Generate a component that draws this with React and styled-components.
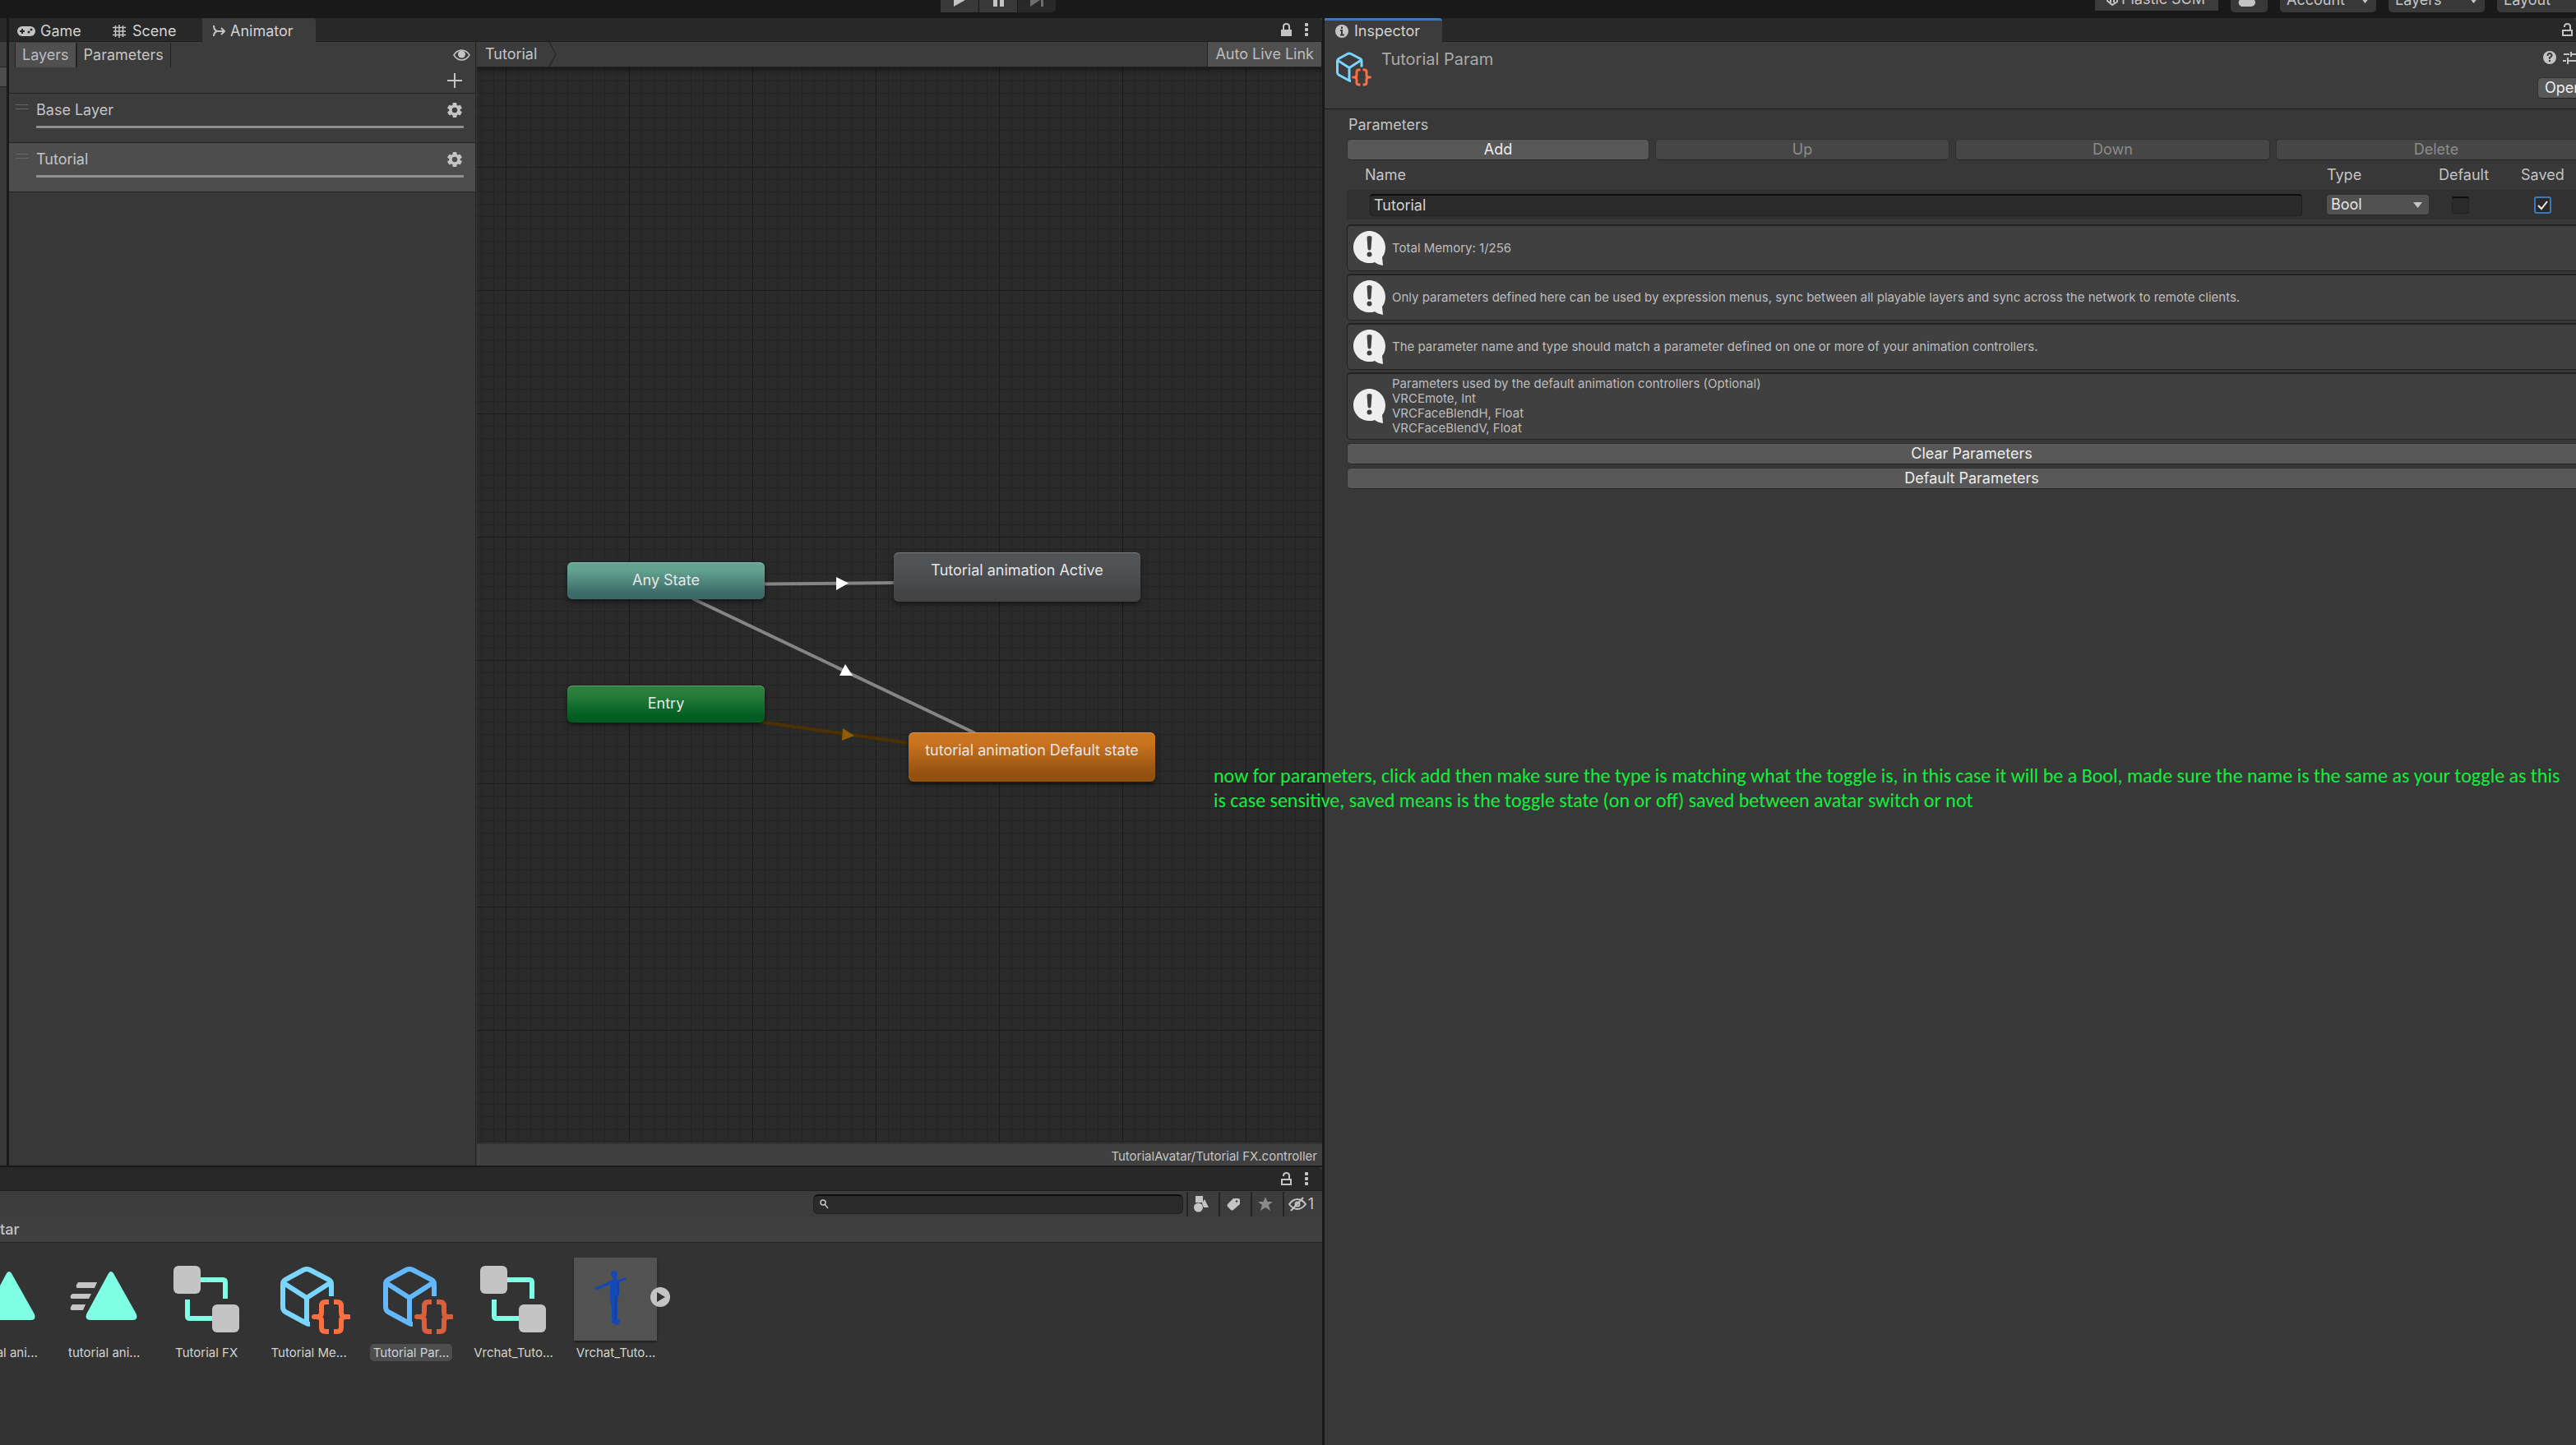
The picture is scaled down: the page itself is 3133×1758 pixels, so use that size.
import React, { useState } from 'react';
import styled, { createGlobalStyle } from 'styled-components';

const GlobalStyle = createGlobalStyle`
    * {
        box-sizing: border-box;
    }
    body {
        margin: 0;
        background-color: #191919;
        color: #c4c4c4;
        font-family: Inter, "Liberation Sans", sans-serif;
        font-size: 18px;
        line-height: 24px;
        overflow: hidden;
    }
    button, input, select {
        font: inherit;
        color: inherit;
    }
    svg {
        display: block;
        flex: none;
    }
`;

const Whole = styled.div`
    position: relative;
    width: 100%;
    height: 100vh;
    display: flex;
    flex-direction: column;
    overflow: hidden;
`;

const TopBar = styled.header`
    display: grid;
    grid-template-columns: minmax(0, 1144fr) minmax(0, 1404fr) minmax(0, 585fr);
    align-content: end;
    height: 22px;
    padding-bottom: 7px;
    overflow: hidden;
`;

const PlayGroup = styled.div`
    grid-column: 2;
    display: flex;
    gap: 1px;
`;

const PlayButton = styled.button`
    display: flex;
    align-items: center;
    justify-content: center;
    width: 46px;
    height: 30px;
    padding: 0;
    border: 0;
    background-color: ${({ disabled }) => (disabled ? '#282828' : '#383838')};
    color: ${({ disabled }) => (disabled ? '#6e6e6e' : '#c4c4c4')};
    border-radius: ${({ disabled }) => (disabled ? '0 5px 5px 0' : '0')};
`;

const TopMenus = styled.div`
    display: flex;
    gap: 15px;
    white-space: nowrap;
`;

const TopButton = styled.button`
    display: flex;
    flex: none;
    align-items: center;
    justify-content: space-between;
    width: ${({ $width }) => $width}px;
    height: 30px;
    padding: 0 8px;
    border: 0;
    border-radius: 5px;
    background-color: #383838;
`;

const PlasticButton = styled(TopButton)`
    justify-content: flex-start;
    gap: 4px;
    height: 28px;
    padding-left: 14px;
    border-radius: 0;
    background-color: #3c3c3c;
`;

const Workspace = styled.div`
    flex: 1;
    min-height: 0;
    display: grid;
    grid-template-columns: 1608fr 1522fr;
    column-gap: 3px;
`;

const LeftSide = styled.div`
    min-width: 0;
    min-height: 0;
    display: grid;
    grid-template-rows: minmax(0, 1396fr) minmax(0, 338fr);
    row-gap: 2px;
`;

const UpperRow = styled.div`
    display: flex;
    gap: 3px;
    min-height: 0;
`;

const SidePanel = styled.div`
    width: 8px;
    background-color: #383838;
`;

const SideStrip = styled.div`
    height: ${({ $height }) => $height}px;
    background-color: ${({ $color }) => $color};
    border-bottom: 1px solid #232323;
`;

const Panel = styled.section`
    flex: 1;
    min-width: 0;
    min-height: 0;
    display: flex;
    flex-direction: column;
    background-color: #383838;
    overflow: hidden;
`;

const TabBar = styled.div`
    display: flex;
    flex: none;
    height: 29px;
    background-color: #282828;
    border-bottom: 1px solid #1e1e1e;
    border-radius: 0 5px 0 0;
`;

const Tab = styled.button`
    display: flex;
    align-items: center;
    gap: ${({ $gap }) => $gap || 6}px;
    height: ${({ $active }) => ($active ? 29 : 28)}px;
    width: ${({ $width }) => $width}px;
    padding: ${({ $focused }) => ($focused ? 0 : 3)}px 0 0 ${({ $pad }) => $pad}px;
    border: 0;
    border-top: ${({ $focused }) => ($focused ? '3px solid #3a79bb' : '0')};
    border-radius: 0 4px 0 0;
    background-color: ${({ $active }) => ($active ? '#3c3c3c' : 'transparent')};
    color: #d2d2d2;
`;

const TabTools = styled.div`
    display: flex;
    align-items: center;
    gap: 16px;
    margin-left: auto;
    padding-right: ${({ $right }) => $right}px;
`;

const IconButton = styled.button`
    display: flex;
    padding: 0;
    border: 0;
    background: none;
    color: #c4c4c4;
`;

const AnimatorBody = styled.div`
    flex: 1;
    min-height: 0;
    display: grid;
    grid-template-columns: 568px minmax(0, 1fr);
`;

const LayerColumn = styled.div`
    border-right: 1px solid #232323;
`;

const LayerToolbar = styled.div`
    display: flex;
    align-items: center;
    height: 31px;
    padding: 0 6px 0 7px;
    background-color: #3c3c3c;
`;

const ToolbarToggle = styled.button`
    height: 30px;
    padding: 0 ${({ $pad }) => $pad}px;
    border: 0;
    border-left: 1px solid #232323;
    border-right: 1px solid #232323;
    background-color: ${({ $on }) => ($on ? '#505050' : '#3c3c3c')};
    color: ${({ $on }) => ($on ? '#bdbdbd' : '#c4c4c4')};
`;

const AddRow = styled.div`
    display: flex;
    align-items: center;
    justify-content: flex-end;
    height: 32px;
    padding-right: 16px;
    background-color: #3c3c3c;
    border-bottom: 1px solid #232323;
`;

const LayerList = styled.ul`
    margin: 0;
    padding: 0;
    list-style: none;
`;

const LayerItem = styled.li`
    display: grid;
    grid-template-columns: 25px minmax(0, 1fr);
    height: 60px;
    padding: 8px 14px 0 8px;
    background-color: ${({ $selected }) => ($selected ? '#4d4d4d' : '#3c3c3c')};
    border-bottom: 1px solid #232323;
`;

const DragHandle = styled.span`
    width: 15px;
    height: 6px;
    margin-top: 5px;
    border-top: 1px solid #666;
    border-bottom: 1px solid #666;
`;

const LayerHead = styled.div`
    display: flex;
    align-items: center;
    justify-content: space-between;
    height: 24px;
    padding-right: 2px;
`;

const WeightBar = styled.div`
    height: 3px;
    margin-top: 7px;
    background-color: #8f8f8f;
`;

const GraphColumn = styled.div`
    display: flex;
    flex-direction: column;
    min-height: 0;
    padding-left: 1px;
`;

const GraphToolbar = styled.div`
    display: flex;
    align-items: center;
    justify-content: space-between;
    height: 31px;
    padding-left: 10px;
    background-color: #3c3c3c;
    border-bottom: 1px solid #232323;
`;

const Crumb = styled.div`
    display: flex;
    align-items: center;
    gap: 14px;
`;

const Graph = styled.div`
    position: relative;
    flex: 1;
    min-height: 0;
    overflow: hidden;
    background-color: #2a2a2a;
    background-image:
        linear-gradient(to bottom, rgba(0, 0, 0, 0.35), transparent 8px),
        linear-gradient(to right, #1b1b1b 1px, transparent 1px),
        linear-gradient(to bottom, #1b1b1b 1px, transparent 1px),
        linear-gradient(to right, #242424 1px, transparent 1px),
        linear-gradient(to bottom, #242424 1px, transparent 1px);
    background-size: 100% 100%, 150px 150px, 150px 150px, 15px 15px, 15px 15px;
    background-position: 0 0, 35px 0, 0 121px, 5px 0, 0 1px;
    background-repeat: no-repeat, repeat, repeat, repeat, repeat;
`;

const Edges = styled.svg`
    position: absolute;
    left: 0;
    top: 0;
`;

const nodeColors = {
    any: ['#63a391', '#3b6a67'],
    entry: ['#2c7f3c', '#005d22'],
    state: ['#515457', '#424345'],
    initial: ['#cb7420', '#93500f'],
};

const Node = styled.div`
    position: absolute;
    left: ${({ $x }) => $x}px;
    top: ${({ $y }) => $y}px;
    width: ${({ $state }) => ($state ? 300 : 240)}px;
    height: ${({ $state }) => ($state ? 60 : 45)}px;
    padding-top: 10px;
    text-align: center;
    color: #e6e6e6;
    border-radius: 6px;
    background-image: linear-gradient(
        to bottom,
        ${({ $kind }) => nodeColors[$kind][0]} 20%,
        ${({ $kind }) => nodeColors[$kind][1]} 85%
    );
    box-shadow: inset 0 1px 1px rgba(255, 255, 255, 0.25), 0 3px 6px rgba(0, 0, 0, 0.5);
`;

const GraphFooter = styled.div`
    height: 28px;
    padding: 3px 6px 0 0;
    border-top: 2px solid #333;
    background-color: #404040;
    font-size: 15px;
    text-align: right;
`;

const ProjectToolbar = styled.div`
    display: flex;
    align-items: center;
    justify-content: flex-end;
    height: 31px;
    background-color: #3c3c3c;
`;

const SearchBox = styled.label`
    display: flex;
    align-items: center;
    width: 450px;
    height: 24px;
    margin-right: 4px;
    padding-left: 7px;
    border: 1px solid #212121;
    border-top: 2px solid #0d0d0d;
    border-radius: 6px;
    background-color: #2a2a2a;
`;

const SearchInput = styled.input`
    flex: 1;
    min-width: 0;
    border: 0;
    outline: 0;
    background: none;
    font-size: 15px;
    line-height: 18px;
`;

const FilterButton = styled.button`
    display: flex;
    align-items: center;
    justify-content: center;
    gap: 2px;
    width: ${({ $wide }) => ($wide ? 48 : 39)}px;
    height: 30px;
    padding: 0 5px 0 0;
    border: 0;
    border-left: 2px solid #252525;
    background: none;
    color: ${({ $dim }) => ($dim ? '#8a8a8a' : '#c4c4c4')};
`;

const PathBar = styled.div`
    display: flex;
    align-items: center;
    height: 32px;
    background-color: #404040;
    border-bottom: 1px solid #232323;
`;

const PathCrumb = styled.div`
    width: 25px;
    white-space: nowrap;
    font-weight: 500;
`;

const AssetGrid = styled.div`
    flex: 1;
    display: grid;
    grid-template-columns: repeat(13, minmax(0, 1fr));
    align-content: start;
    margin-left: -60px;
    padding: 18px 50px 0 0;
    background-color: #333;
`;

const Asset = styled.div`
    position: relative;
    display: flex;
    flex-direction: column;
    align-items: center;
    gap: 4px;
`;

const AssetLabel = styled.div`
    height: 21px;
    padding: 0 4px;
    border-radius: 5px;
    background-color: ${({ $selected }) => ($selected ? '#4d4d4d' : 'transparent')};
    color: #d2d2d2;
    font-size: 15px;
    line-height: 21px;
    white-space: nowrap;
`;

const Thumb = styled.div`
    width: 101px;
    height: 101px;
    background-color: ${({ $filled }) => ($filled ? '#525252' : 'transparent')};
    box-shadow: ${({ $filled }) => ($filled ? '0 2px 3px rgba(0, 0, 0, 0.4)' : 'none')};
`;

const ExpandButton = styled.button`
    position: absolute;
    left: 104px;
    top: 36px;
    padding: 0;
    border: 0;
    background: none;
`;

const InspectorHeader = styled.div`
    display: flex;
    align-items: flex-start;
    height: 82px;
    margin-right: -32px;
    padding: 9px 15px 0 13px;
    background-color: #3c3c3c;
    border-bottom: 1px solid #1a1a1a;
`;

const AssetTitle = styled.h1`
    margin: 0 0 0 10px;
    color: #a9a9a9;
    font-size: 20px;
    font-weight: 400;
    line-height: 24px;
`;

const HeaderTools = styled.div`
    display: flex;
    flex-direction: column;
    gap: 16px;
    margin-left: auto;
    padding-top: 2px;
`;

const HeaderIcons = styled.div`
    display: flex;
    gap: 8px;
    padding-left: 7px;
`;

const InspectorBody = styled.div`
    margin-right: -25px;
    padding: 7px 0 0 27px;
`;

const SectionLabel = styled.h2`
    margin: 0 0 5px 2px;
    font-size: 18px;
    font-weight: 400;
    line-height: 24px;
`;

const Button = styled.button`
    height: 26px;
    padding: 0 8px;
    border: 1px solid #303030;
    border-bottom-color: #242424;
    border-radius: 5px;
    background-color: ${({ disabled }) => (disabled ? '#464646' : '#585858')};
    color: ${({ disabled }) => (disabled ? '#8c8c8c' : '#eee')};
    line-height: 24px;
    white-space: nowrap;
`;

const ButtonRow = styled.div`
    display: grid;
    grid-template-columns: 368fr 358fr 383fr 390fr;
    column-gap: 7px;
    margin-bottom: 3px;
`;

const ParamTable = styled.table`
    width: 100%;
    table-layout: fixed;
    border-collapse: collapse;
    th {
        height: 33px;
        padding: 0 0 4px;
        font-weight: 400;
        text-align: left;
    }
    th:first-child {
        padding-left: 22px;
    }
    td {
        height: 36px;
        padding: 0;
        background-color: #313131;
    }
`;

const HeadCell = styled.th`
    width: ${({ $width }) => $width}px;
`;

const NameInput = styled.input`
    display: block;
    width: calc(100% - 58px);
    height: 27px;
    margin-left: 28px;
    padding: 0 4px;
    border: 1px solid #212121;
    border-top: 2px solid #0d0d0d;
    border-radius: 4px;
    background-color: #2a2a2a;
    color: #d2d2d2;
`;

const SelectWrap = styled.div`
    display: grid;
    width: 124px;
    align-items: center;
    select, svg {
        grid-area: 1 / 1;
    }
    svg {
        justify-self: end;
        margin-right: 8px;
        pointer-events: none;
    }
`;

const TypeSelect = styled.select`
    appearance: none;
    width: 124px;
    height: 25px;
    padding: 0 5px;
    border: 0;
    border-bottom: 1px solid #242424;
    border-radius: 4px;
    background-color: #515151;
    color: #e4e4e4;
    line-height: 24px;
`;

const Check = styled.input`
    display: block;
    appearance: none;
    width: 21px;
    height: 21px;
    margin: 0 0 0 16px;
    border: 1px solid #212121;
    border-top: 2px solid #0d0d0d;
    border-radius: 3px;
    background-color: #2a2a2a;
    &:checked {
        border: 2px solid #3a79bb;
    }
`;

const CheckWrap = styled.div`
    display: grid;
    align-items: center;
    input, svg {
        grid-area: 1 / 1;
    }
    svg {
        margin-left: 19px;
        pointer-events: none;
    }
`;

const HelpList = styled.div`
    display: flex;
    flex-direction: column;
    gap: 3px;
    margin-top: 6px;
`;

const HelpBox = styled.div`
    display: flex;
    align-items: center;
    gap: 8px;
    min-height: 57px;
    padding: 3px 7px 4px;
    border: 1px solid #232323;
    border-top-width: 2px;
    border-radius: 5px;
    background-color: #404040;
    color: #bdbdbd;
    font-size: 15px;
    line-height: 18px;
    white-space: pre-line;
`;

const WideButtons = styled.div`
    display: flex;
    flex-direction: column;
    gap: 4px;
    margin-top: 4px;
`;

const Note = styled.p`
    position: absolute;
    left: 1476px;
    top: 929px;
    width: 1650px;
    margin: 0;
    color: #10f03a;
    font-family: Carlito, Lato, sans-serif;
    font-size: 24px;
    line-height: 30px;
`;

function GamepadIcon() {
    return (
        <svg width="22" height="12" viewBox="0 0 22 12">
            <rect width="22" height="12" rx="6" fill="#c4c4c4" />
            <path d="M6 3v6M3 6h6" stroke="#282828" strokeWidth="2" />
            <circle cx="17" cy="4" r="1.5" fill="#282828" />
            <circle cx="14" cy="7" r="1.5" fill="#282828" />
        </svg>
    );
}

function HashIcon() {
    return (
        <svg width="16" height="16" viewBox="0 0 16 16" stroke="#c4c4c4" strokeWidth="1.5">
            <path d="M3.5 1v14M8 0v16M12.5 1v14M0 3.5h16M1 8h15M0 12.5h16" />
        </svg>
    );
}

function AnimatorIcon() {
    return (
        <svg width="15" height="14" viewBox="0 0 15 14" fill="none" stroke="#c4c4c4" strokeWidth="2">
            <path d="M1 0c0 4 2 7 6 7h6M1 13c0-3 1-5 4-6" />
            <path d="M10 3l4 4-4 4" />
        </svg>
    );
}

function InfoIcon() {
    return (
        <svg width="16" height="16" viewBox="0 0 16 16">
            <circle cx="8" cy="8" r="8" fill="#c4c4c4" />
            <path d="M8 2.5v2.5M6 7h2v5M6 12.5h5" stroke="#3c3c3c" strokeWidth="2" fill="none" />
        </svg>
    );
}

function LockIcon({ open }) {
    return (
        <svg width="13" height="16" viewBox="0 0 13 16" fill="none" stroke="#c4c4c4" strokeWidth="2">
            {open ? (
                <>
                    <path d="M3 5V4a3.5 3 0 0 1 7 0v5" />
                    <rect x="1" y="9" width="11" height="6" />
                </>
            ) : (
                <>
                    <path d="M3 8V4a3.5 3 0 0 1 7 0v4" />
                    <rect x="1" y="9" width="11" height="6" fill="#c4c4c4" />
                </>
            )}
        </svg>
    );
}

function DotsIcon() {
    return (
        <svg width="4" height="16" viewBox="0 0 4 16" fill="#c4c4c4">
            <rect width="4" height="4" rx="1" />
            <rect y="6" width="4" height="4" rx="1" />
            <rect y="12" width="4" height="4" rx="1" />
        </svg>
    );
}

function EyeIcon() {
    return (
        <svg width="21" height="14" viewBox="0 0 21 14">
            <path d="M1 7C4 2 8 1 10.5 1S17 2 20 7c-3 5-7 6-9.5 6S4 12 1 7z" fill="none" stroke="#c4c4c4" strokeWidth="1.5" />
            <circle cx="10.5" cy="6" r="4.5" fill="#c4c4c4" />
        </svg>
    );
}

function GearIcon() {
    const teeth = [0, 60, 120, 180, 240, 300];
    return (
        <svg width="18" height="18" viewBox="-9 -9 18 18">
            {teeth.map((deg) => (
                <rect key={deg} x="-2.5" y="-9" width="5" height="5" rx="1" fill="#c4c4c4" transform={`rotate(${deg})`} />
            ))}
            <circle r="5" fill="none" stroke="#c4c4c4" strokeWidth="3.6" />
        </svg>
    );
}

function CaretIcon() {
    return (
        <svg width="11" height="7" viewBox="0 0 11 7" fill="#c4c4c4">
            <path d="M0 0h11L5.5 7z" />
        </svg>
    );
}

function BubbleIcon() {
    return (
        <svg width="39" height="42" viewBox="0 0 39 42">
            <path d="M19.5 0C30 0 39 9 39 20c0 5-2 10-4 12l1 10c-4-1-8-2-10-4-2 1-4 1-6.5 1C9 39 0 31 0 20S9 0 19.5 0z" fill="#eee" />
            <path d="M16.5 8q0-2 3-2t3 2l-1 14q-2 3-4 0z" fill="#404040" />
            <circle cx="19.5" cy="28.5" r="3" fill="#404040" />
        </svg>
    );
}

// blue cube with orange braces, drawn in an 88 x 84 box
function CubeShape({ cube, brace }) {
    return (
        <g fill="none" strokeWidth="6" strokeLinejoin="round">
            <g stroke={cube}>
                <path d="M64 39V24q0-3-3-5L38 7q-4-2-8 0L8 19q-3 2-3 5v28q0 4 3 6l24 13q3 2 6 2" />
                <path d="M6 23l28 18 28-18M34 41v31" />
            </g>
            <g stroke={brace}>
                <path d="M61 46h-4q-5 0-5 5v8q0 5-6 5h-3 3q6 0 6 5v8q0 5 5 5h4" />
                <path d="M67 46h4q5 0 5 5v8q0 5 6 5h3-3q-6 0-6 5v8q0 5-5 5h-4" />
            </g>
        </g>
    );
}

function AssetIcon({ type }) {
    return (
        <svg width="101" height="101" viewBox="0 0 101 101">
            {type === 'clip' && (
                <>
                    <path d="M55 21q4-8 8 0l27 48q2 7-4 7H34q-7 0-5-7z" fill="#7fffe4" />
                    <path
                        d="M19 30h23l-3 7H18q-2-1-1-4zM12 44h23l-3 6H11q-2-1-1-4zM12 57h16l-3 7H11q-2-1-1-4z"
                        fill="#c4c4c4"
                    />
                </>
            )}
            {type === 'controller' && (
                <>
                    <path d="M43 27h27q3 0 3 3v20M27 51v20q0 3 3 3h27" fill="none" stroke="#7fffe4" strokeWidth="6" />
                    <rect x="10" y="10" width="33" height="34" rx="6" fill="#c4c4c4" />
                    <rect x="57" y="57" width="33" height="34" rx="6" fill="#c4c4c4" />
                </>
            )}
            {type === 'object' && (
                <g transform="translate(14 8)">
                    <CubeShape cube="#7ad6fd" brace="#ff6e40" />
                </g>
            )}
            {type === 'objectSelected' && (
                <g transform="translate(14 8)">
                    <CubeShape cube="#64b8ff" brace="#d85f3c" />
                </g>
            )}
            {type === 'avatar' && (
                <>
                    <path
                        d="M45 20q0-4 4-4t4 4l-1 6 3 1 7-3 2 1-1 2-8 3 0 14-2 12v19l4 1v2l-3 1 1 2-4 1-5-3V63l-2-14V33l-6 2-6 3-6 1-1-2 12-5 8-4 3-2z"
                        fill="#1349b5"
                    />
                    <path d="M51 46l-1 31M54 30v14" stroke="#0e3a92" fill="none" />
                </>
            )}
        </svg>
    );
}

const layers = ['Base Layer', 'Tutorial'];

const assets = [
    { label: 'tutorial ani...', type: 'clip' },
    { label: 'tutorial ani...', type: 'clip' },
    { label: 'Tutorial FX', type: 'controller' },
    { label: 'Tutorial Me...', type: 'object' },
    { label: 'Tutorial Par...', type: 'objectSelected' },
    { label: 'Vrchat_Tuto...', type: 'controller' },
    { label: 'Vrchat_Tuto...', type: 'avatar' },
];

const helpTexts = [
    'Total Memory: 1/256',
    'Only parameters defined here can be used by expression menus, sync between all playable layers and sync across the network to remote clients.',
    'The parameter name and type should match a parameter defined on one or more of your animation controllers.',
    'Parameters used by the default animation controllers (Optional)\nVRCEmote, Int\nVRCFaceBlendH, Float\nVRCFaceBlendV, Float',
];

function MainToolbar() {
    return (
        <TopBar>
            <PlayGroup>
                <PlayButton aria-label="Play">
                    <svg width="14" height="16" viewBox="0 0 14 16"><path d="M0 0l14 8-14 8z" fill="currentColor" /></svg>
                </PlayButton>
                <PlayButton aria-label="Pause">
                    <svg width="13" height="16" viewBox="0 0 13 16"><path d="M0 0h5v16H0zM8 0h5v16H8z" fill="currentColor" /></svg>
                </PlayButton>
                <PlayButton aria-label="Step" disabled>
                    <svg width="16" height="16" viewBox="0 0 16 16"><path d="M0 0l12 8-12 8zM13 0h3v16h-3z" fill="currentColor" /></svg>
                </PlayButton>
            </PlayGroup>
            <TopMenus>
                <PlasticButton $width={150}>
                    <svg width="14" height="16" viewBox="0 0 14 16" fill="none" stroke="#c4c4c4" strokeWidth="2">
                        <path d="M1 4v6l6 5 6-4V4L7 1zM5 5v7M9 5v7" />
                    </svg>
                    Plastic SCM
                </PlasticButton>
                <TopButton $width={45} aria-label="Cloud">
                    <svg width="22" height="15" viewBox="0 0 22 15"><path d="M5 15a5 5 0 0 1-1-9 7 7 0 0 1 13-1 5 5 0 0 1 0 10z" fill="#c4c4c4" /></svg>
                </TopButton>
                <TopButton $width={117}>Account<CaretIcon /></TopButton>
                <TopButton $width={117}>Layers<CaretIcon /></TopButton>
                <TopButton $width={117}>Layout<CaretIcon /></TopButton>
            </TopMenus>
        </TopBar>
    );
}

function LayersPane() {
    return (
        <LayerColumn>
            <LayerToolbar>
                <ToolbarToggle $on $pad={8}>Layers</ToolbarToggle>
                <ToolbarToggle $pad={8}>Parameters</ToolbarToggle>
                <TabTools $right={0}>
                    <IconButton aria-label="Toggle visibility"><EyeIcon /></IconButton>
                </TabTools>
            </LayerToolbar>
            <AddRow>
                <IconButton aria-label="Add layer">
                    <svg width="18" height="18" viewBox="0 0 18 18"><path d="M9 0v18M0 9h18" stroke="#c4c4c4" strokeWidth="2" /></svg>
                </IconButton>
            </AddRow>
            <LayerList>
                {layers.map((name) => (
                    <LayerItem key={name} $selected={name === 'Tutorial'}>
                        <DragHandle />
                        <div>
                            <LayerHead>
                                {name}
                                <IconButton aria-label={`${name} settings`}><GearIcon /></IconButton>
                            </LayerHead>
                            <WeightBar />
                        </div>
                    </LayerItem>
                ))}
            </LayerList>
        </LayerColumn>
    );
}

function StateGraph() {
    return (
        <GraphColumn>
            <GraphToolbar>
                <Crumb>
                    Tutorial
                    <svg width="10" height="30" viewBox="0 0 10 30"><path d="M1 0l8 15-8 15" fill="none" stroke="#2a2a2a" strokeWidth="1.5" /></svg>
                </Crumb>
                <ToolbarToggle $on $pad={9}>Auto Live Link</ToolbarToggle>
            </GraphToolbar>
            <Graph>
                <Edges width="1028" height="1308" viewBox="0 0 1028 1308">
                    <g stroke="#858585" strokeWidth="4">
                        <path d="M350 628.5L507 627" />
                        <path d="M262 646L606 810" />
                    </g>
                    <path d="M343 796L526 822" stroke="#4d3000" strokeWidth="4" />
                    <g fill="#fff">
                        <path d="M437 620l15 7.5-15 8.5z" />
                        <path d="M448 726l-7 14h16z" />
                    </g>
                    <path d="M445 804l14 9-15 6z" fill="#8f5e00" />
                </Edges>
                <Node $kind="any" $x={110} $y={602}>Any State</Node>
                <Node $kind="entry" $x={110} $y={752}>Entry</Node>
                <Node $kind="state" $state $x={507} $y={590}>Tutorial animation Active</Node>
                <Node $kind="initial" $state $x={525} $y={809}>tutorial animation Default state</Node>
            </Graph>
            <GraphFooter>TutorialAvatar/Tutorial FX.controller</GraphFooter>
        </GraphColumn>
    );
}

function ProjectPanel() {
    const [search, setSearch] = useState('');

    return (
        <Panel>
            <TabBar>
                <TabTools $right={17}>
                    <IconButton aria-label="Lock"><LockIcon open /></IconButton>
                    <IconButton aria-label="More"><DotsIcon /></IconButton>
                </TabTools>
            </TabBar>
            <ProjectToolbar>
                <SearchBox>
                    <svg width="11" height="12" viewBox="0 0 11 12" fill="none" stroke="#c4c4c4" strokeWidth="1.5">
                        <circle cx="4" cy="4" r="3" />
                        <path d="M6 6l4 5" />
                    </svg>
                    <SearchInput aria-label="Search" value={search} onChange={(e) => setSearch(e.target.value)} />
                </SearchBox>
                <FilterButton aria-label="Search by type">
                    <svg width="18" height="20" viewBox="0 0 18 20" fill="currentColor">
                        <rect x="2" width="9" height="8" />
                        <circle cx="5.5" cy="14" r="5.5" />
                        <path d="M13 4l5 10h-6l-2-5z" />
                    </svg>
                </FilterButton>
                <FilterButton aria-label="Search by label">
                    <svg width="16" height="16" viewBox="0 0 16 16">
                        <path d="M8 1h6q2 0 2 2v5l-8 7q-2 1-3 0l-4-4q-1-2 0-3z" fill="currentColor" />
                        <circle cx="12" cy="4.5" r="1.2" fill="#3c3c3c" />
                    </svg>
                </FilterButton>
                <FilterButton $dim aria-label="Save search">
                    <svg width="18" height="17" viewBox="0 0 18 17" fill="currentColor">
                        <path d="M9 0l2.5 6H18l-5 4 2 7-6-4-6 4 2-7-5-4h6.5z" />
                    </svg>
                </FilterButton>
                <FilterButton $wide>
                    <svg width="22" height="18" viewBox="0 0 22 18" fill="none" stroke="currentColor" strokeWidth="2">
                        <path d="M1 9c3-4 6-6 10-6s7 2 10 6c-3 4-6 6-10 6S4 13 1 9zM3 17L18 1" />
                        <circle cx="11" cy="9" r="2.5" />
                    </svg>
                    1
                </FilterButton>
            </ProjectToolbar>
            <PathBar>
                <PathCrumb>tar</PathCrumb>
            </PathBar>
            <AssetGrid>
                {assets.map(({ label, type }, index) => (
                    <Asset key={index}>
                        <Thumb $filled={type === 'avatar'}><AssetIcon type={type} /></Thumb>
                        <AssetLabel $selected={type === 'objectSelected'}>{label}</AssetLabel>
                        {type === 'avatar' && (
                            <ExpandButton aria-label="Expand">
                                <svg width="24" height="24" viewBox="0 0 24 24">
                                    <circle cx="12" cy="12" r="12" fill="#c4c4c4" />
                                    <path d="M8 6l10 6-10 6z" fill="#333" />
                                </svg>
                            </ExpandButton>
                        )}
                    </Asset>
                ))}
            </AssetGrid>
        </Panel>
    );
}

function Inspector() {
    const [name, setName] = useState('Tutorial');
    const [isDefault, setIsDefault] = useState(false);
    const [saved, setSaved] = useState(true);

    return (
        <Panel>
            <TabBar>
                <Tab $active $focused $width={143} $pad={13} $gap={7}><InfoIcon />Inspector</Tab>
                <TabTools $right={4}>
                    <IconButton aria-label="Lock"><LockIcon open /></IconButton>
                </TabTools>
            </TabBar>
            <InspectorHeader>
                <svg width="46" height="50" viewBox="0 0 92 100">
                    <g transform="translate(0 4)"><CubeShape cube="#7ad6fd" brace="#ff6e40" /></g>
                </svg>
                <AssetTitle>Tutorial Param</AssetTitle>
                <HeaderTools>
                    <HeaderIcons>
                        <IconButton aria-label="Help">
                            <svg width="16" height="16" viewBox="0 0 16 16">
                                <circle cx="8" cy="8" r="8" fill="#c4c4c4" />
                                <path d="M5.5 6q0-3 2.5-3t2.5 2.5Q10.5 7 8 8v2M8 11v2" fill="none" stroke="#3c3c3c" strokeWidth="2" />
                            </svg>
                        </IconButton>
                        <IconButton aria-label="Presets">
                            <svg width="16" height="16" viewBox="0 0 16 16" stroke="#c4c4c4" strokeWidth="2">
                                <path d="M1 4h7M10 1v6M10 4h6M0 12h4M6 8v8M6 12h10" />
                            </svg>
                        </IconButton>
                    </HeaderIcons>
                    <Button>Open</Button>
                </HeaderTools>
            </InspectorHeader>
            <InspectorBody>
                <SectionLabel>Parameters</SectionLabel>
                <ButtonRow>
                    <Button>Add</Button>
                    <Button disabled>Up</Button>
                    <Button disabled>Down</Button>
                    <Button disabled>Delete</Button>
                </ButtonRow>
                <ParamTable>
                    <thead>
                        <tr>
                            <th id="col-name">Name</th>
                            <HeadCell id="col-type" $width={136}>Type</HeadCell>
                            <HeadCell id="col-default" $width={100}>Default</HeadCell>
                            <HeadCell id="col-saved" $width={92}>Saved</HeadCell>
                        </tr>
                    </thead>
                    <tbody>
                        <tr>
                            <td>
                                <NameInput aria-labelledby="col-name" value={name} onChange={(e) => setName(e.target.value)} />
                            </td>
                            <td>
                                <SelectWrap>
                                    <TypeSelect aria-labelledby="col-type" defaultValue="Bool">
                                        <option>Int</option>
                                        <option>Float</option>
                                        <option>Bool</option>
                                    </TypeSelect>
                                    <CaretIcon />
                                </SelectWrap>
                            </td>
                            <td>
                                <Check type="checkbox" aria-labelledby="col-default" checked={isDefault} onChange={(e) => setIsDefault(e.target.checked)} />
                            </td>
                            <td>
                                <CheckWrap>
                                    <Check type="checkbox" aria-labelledby="col-saved" checked={saved} onChange={(e) => setSaved(e.target.checked)} />
                                    {saved && (
                                        <svg width="15" height="13" viewBox="0 0 15 13"><path d="M2 7l4 4 7-9" fill="none" stroke="#eee" strokeWidth="2" /></svg>
                                    )}
                                </CheckWrap>
                            </td>
                        </tr>
                    </tbody>
                </ParamTable>
                <HelpList>
                    {helpTexts.map((text) => (
                        <HelpBox key={text}><BubbleIcon />{text}</HelpBox>
                    ))}
                </HelpList>
                <WideButtons>
                    <Button>Clear Parameters</Button>
                    <Button>Default Parameters</Button>
                </WideButtons>
            </InspectorBody>
        </Panel>
    );
}

export default function App() {
    return (
        <Whole>
            <GlobalStyle />
            <MainToolbar />
            <Workspace>
                <LeftSide>
                    <UpperRow>
                        <SidePanel>
                            <SideStrip $height={29} $color="#282828" />
                            <SideStrip $height={31} $color="#3c3c3c" />
                            <SideStrip $height={24} $color="#4d4d4d" />
                        </SidePanel>
                        <Panel>
                            <TabBar>
                                <Tab $width={115} $pad={10}><GamepadIcon />Game</Tab>
                                <Tab $width={120} $pad={11} $gap={8}><HashIcon />Scene</Tab>
                                <Tab $active $width={138} $pad={13}><AnimatorIcon />Animator</Tab>
                                <TabTools $right={17}>
                                    <IconButton aria-label="Lock"><LockIcon /></IconButton>
                                    <IconButton aria-label="More"><DotsIcon /></IconButton>
                                </TabTools>
                            </TabBar>
                            <AnimatorBody>
                                <LayersPane />
                                <StateGraph />
                            </AnimatorBody>
                        </Panel>
                    </UpperRow>
                    <ProjectPanel />
                </LeftSide>
                <Inspector />
            </Workspace>
            <Note>
                now for parameters, click add then make sure the type is matching what the toggle is, in this case it will be a Bool, made sure the name is the same as your toggle as this is case sensitive, saved means is the toggle state (on or off) saved between avatar switch or not
            </Note>
        </Whole>
    );
}
